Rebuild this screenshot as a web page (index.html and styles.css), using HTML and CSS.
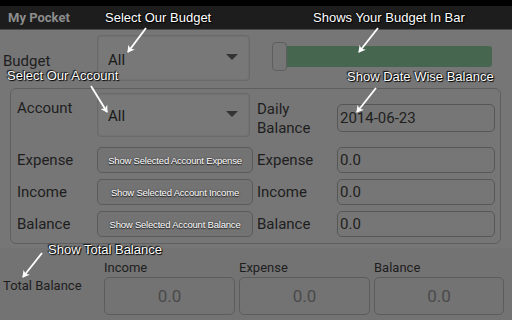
FILE: index.html
```html
<!DOCTYPE html>
<html lang="en">
<head>
    <meta charset="UTF-8">
    <meta name="viewport" content="width=device-width, initial-scale=1.0">
    <title>My Pocket</title>
    <link rel="stylesheet" href="styles.css">
</head>
<body>
    <div class="screen">
        <div class="status-bar"></div>
        <div class="title-bar">My Pocket</div>

        <div class="budget-row">
            <label class="field-label budget-label">Budget</label>
            <div class="spinner">All<span class="caret"></span></div>
            <div class="budget-bar">
                <div class="bar-thumb"></div>
                <div class="bar-fill"></div>
            </div>
        </div>

        <div class="panel">
            <div class="field-label account-label">Account</div>
            <div class="spinner spinner-tall">All<span class="caret"></span></div>
            <div class="field-label two-line">Daily<br>Balance</div>
            <div class="value-box date-box">2014-06-23</div>

            <div class="field-label">Expense</div>
            <button class="show-btn">Show Selected Account Expense</button>
            <div class="field-label">Expense</div>
            <div class="value-box">0.0</div>

            <div class="field-label">Income</div>
            <button class="show-btn">Show Selected Account Income</button>
            <div class="field-label">Income</div>
            <div class="value-box">0.0</div>

            <div class="field-label">Balance</div>
            <button class="show-btn">Show Selected Account Balance</button>
            <div class="field-label">Balance</div>
            <div class="value-box">0.0</div>
        </div>

        <div class="totals">
            <div class="total-label">Total Balance</div>
            <div class="total-col">
                <div class="total-title">Income</div>
                <div class="total-box">0.0</div>
            </div>
            <div class="total-col">
                <div class="total-title">Expense</div>
                <div class="total-box">0.0</div>
            </div>
            <div class="total-col">
                <div class="total-title">Balance</div>
                <div class="total-box">0.0</div>
            </div>
        </div>

        <!-- help overlay -->
        <div class="note note-budget">Select Our Budget</div>
        <div class="note note-bar">Shows Your Budget In Bar</div>
        <div class="note note-account">Select Our Account</div>
        <div class="note note-date">Show Date Wise Balance</div>
        <div class="note note-total">Show Total Balance</div>

        <svg class="arrows" width="512" height="320" viewBox="0 0 512 320">
            <defs>
                <marker id="head" markerWidth="8" markerHeight="8" refX="6" refY="4" orient="auto" markerUnits="userSpaceOnUse">
                    <path d="M0,0 L7,4 L0,8 L2,4 Z" fill="#fff"/>
                </marker>
            </defs>
            <g stroke="#fff" stroke-width="1.8" fill="none" marker-end="url(#head)">
                <line x1="146" y1="28" x2="128" y2="52"/>
                <line x1="378" y1="28" x2="359" y2="52"/>
                <line x1="91" y1="86" x2="107" y2="112"/>
                <line x1="376" y1="88" x2="357" y2="112"/>
                <line x1="42" y1="253" x2="23" y2="277"/>
            </g>
        </svg>
    </div>
</body>
</html>
```

FILE: styles.css
```css
body {
    margin: 0;
    background: #767676;
    font-family: Roboto, 'Liberation Sans', sans-serif;
}

.screen {
    position: relative;
    width: 512px;
    height: 320px;
    overflow: hidden;
    background: #767676;
}

.status-bar {
    height: 6px;
    background: #000;
}

.title-bar {
    height: 23px;
    line-height: 24px;
    padding-left: 8px;
    background: #1d1d1d;
    border-bottom: 1px solid #4a4a4a;
    color: #8c8c8c;
    font-weight: bold;
    font-size: 13px;
}

.field-label {
    color: #1e1e1e;
    font-size: 15px;
    display: flex;
    align-items: center;
}

.budget-row {
    display: flex;
    align-items: flex-start;
    height: 53px;
    padding-top: 5px;
    padding-left: 3px;
}

.budget-label {
    width: 94px;
    height: 43px;
    padding-top: 8px;
    box-sizing: border-box;
}

.spinner {
    width: 141px;
    height: 41px;
    border: 1px solid #6a6a6a;
    border-radius: 4px;
    background: #787878;
    display: flex;
    align-items: center;
    padding-left: 10px;
    padding-top: 3px;
    box-sizing: content-box;
    font-size: 15px;
    color: #1a1a1a;
    position: relative;
    box-shadow: inset 0 0 2px rgba(0, 0, 0, 0.15);
}

.caret {
    position: absolute;
    right: 11px;
    top: 50%;
    margin-top: -4px;
    border-left: 6px solid transparent;
    border-right: 6px solid transparent;
    border-top: 6px solid #333;
}

.budget-bar {
    display: flex;
    align-items: center;
    height: 43px;
    margin-left: 22px;
    width: 220px;
}

.bar-thumb {
    width: 13px;
    height: 27px;
    border: 1px solid #5e5e5e;
    border-radius: 4px;
    background: #767676;
}

.bar-fill {
    flex: 1;
    height: 21px;
    background: #476650;
    border-radius: 0 3px 3px 0;
}

.panel {
    margin-left: 10px;
    width: 478px;
    height: 144px;
    border: 1px solid #5f5f5f;
    border-radius: 6px;
    padding: 4px 5px 6px 6px;
    display: grid;
    grid-template-columns: 80px 160px 80px 158px;
    grid-template-rows: 48px 26px 26px 26px;
    row-gap: 6px;
    align-items: center;
}

.account-label {
    align-self: start;
    margin-top: 6px;
}

.spinner-tall {
    height: 40px;
    padding-top: 2px;
    align-self: start;
}

.two-line {
    line-height: 19px;
    align-self: start;
    margin-top: 7px;
}

.value-box {
    height: 26px;
    border: 1px solid #565656;
    border-radius: 5px;
    padding-left: 2px;
    display: flex;
    align-items: center;
    font-size: 15px;
    color: #1e1e1e;
    box-sizing: border-box;
}

.date-box {
    height: 28px;
    align-self: start;
    margin-top: 11px;
}

.show-btn {
    height: 26px;
    width: 156px;
    padding: 0;
    background: #737373;
    border: 1px solid #5a5a5a;
    border-radius: 5px;
    color: #fff;
    font-family: 'Liberation Sans', Arial, sans-serif;
    font-size: 9.5px;
    letter-spacing: -0.2px;
    text-shadow: 0 1px 1px #222, 0 0 2px #333;
}

.totals {
    margin-top: 4px;
    display: grid;
    grid-template-columns: 100px 131px 131px 130px;
    column-gap: 4px;
    align-items: end;
    height: 72px;
    background: #737373;
}

.total-label {
    padding-left: 3px;
    font-size: 13px;
    color: #1e1e1e;
    align-self: start;
    margin-top: 30px;
}

.total-title {
    font-size: 13px;
    color: #1e1e1e;
    margin-bottom: 2px;
}

.total-box {
    height: 36px;
    border: 1px solid #5c5c5c;
    border-radius: 5px;
    display: flex;
    align-items: center;
    justify-content: center;
    font-size: 17px;
    color: #4a4a4a;
    margin-bottom: 5px;
}

.note {
    position: absolute;
    color: #fff;
    font-family: 'Liberation Sans', Arial, sans-serif;
    font-size: 13px;
    white-space: nowrap;
    text-shadow: 0 0 1px #000, 1px 1px 1px #000, -1px -1px 1px #111;
}

.note-budget { left: 105px; top: 10px; }
.note-bar { left: 313px; top: 10px; }
.note-account { left: 7px; top: 68px; }
.note-date { left: 347px; top: 69px; }
.note-total { left: 48px; top: 242px; }

.arrows {
    position: absolute;
    left: 0;
    top: 0;
    pointer-events: none;
}
```
